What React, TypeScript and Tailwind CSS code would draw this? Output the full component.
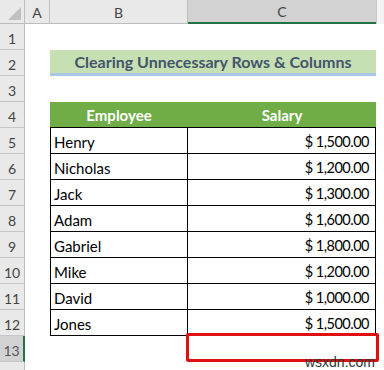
import React from "react";

const rows: [string, string][] = [
  ["Henry", "$ 1,500.00"],
  ["Nicholas", "$ 1,200.00"],
  ["Jack", "$ 1,300.00"],
  ["Adam", "$ 1,600.00"],
  ["Gabriel", "$ 1,800.00"],
  ["Mike", "$ 1,200.00"],
  ["David", "$ 1,000.00"],
  ["Jones", "$ 1,500.00"],
];

function RowHead({ n, sel }: { n: number; sel?: boolean }) {
  return (
    <div
      className={
        sel
          ? "w-[25px] shrink-0 h-full bg-[#d2d2d2] border-b border-[#c6c6c6] border-r-2 border-r-[#217346] flex items-center justify-center text-[14px] text-[#555] pt-[3px]"
          : "w-[25px] shrink-0 h-full bg-[#e9e9e9] border-b border-r border-[#c6c6c6] border-r-[#bdbdbd] flex items-center justify-center text-[14px] text-[#444] pt-[3px]"
      }
    >
      {n}
    </div>
  );
}

export default function App() {
  const font = { fontFamily: "Lato, 'Liberation Sans', sans-serif" };
  return (
    <div className="relative w-[384px] h-[370px] bg-white overflow-hidden" style={font}>
      {/* column header */}
      <div className="flex h-[24px]">
        <div className="relative w-[25px] shrink-0 h-full bg-[#e9e9e9] border-r border-b border-[#bdbdbd]">
          <div className="absolute right-[3px] bottom-[3px] w-0 h-0 border-l-[13px] border-l-transparent border-b-[13px] border-b-[#c0c0c0]" />
        </div>
        <div className="w-[25px] shrink-0 h-full bg-[#e9e9e9] border-r border-b border-[#bdbdbd] flex items-center justify-center text-[14px] text-[#444] pt-[1px]">
          A
        </div>
        <div className="w-[138px] shrink-0 h-full bg-[#e9e9e9] border-r border-b border-[#bdbdbd] flex items-center justify-center text-[14px] text-[#444] pt-[1px]">
          B
        </div>
        <div className="w-[188px] shrink-0 h-full bg-[#d2d2d2] border-b-2 border-[#217346] flex items-center justify-center text-[14px] text-[#444] pt-[1px]">
          C
        </div>
        <div className="flex-1 h-full bg-[#f3f3f3] border-l border-[#c8c8c8]" />
      </div>

      {/* row 1 */}
      <div className="flex h-[26px]">
        <RowHead n={1} />
      </div>
      {/* row 2 title */}
      <div className="flex h-[26px]">
        <RowHead n={2} />
        <div className="w-[25px] shrink-0" />
        <div className="w-[326px] shrink-0 h-full bg-[#c6e0b4] border-b-[3px] border-[#a9c6e4] flex items-center justify-center text-[16px] font-bold text-[#44546a] pt-[1px]">
          Clearing Unnecessary Rows &amp; Columns
        </div>
      </div>
      {/* row 3 */}
      <div className="flex h-[26px]">
        <RowHead n={3} />
      </div>
      {/* row 4 header */}
      <div className="flex h-[26px]">
        <RowHead n={4} />
        <div className="w-[25px] shrink-0" />
        <div className="w-[138px] shrink-0 h-full bg-[#70ad47] border-b border-black flex items-center justify-center text-[15px] font-bold text-white pt-[2px]">
          Employee
        </div>
        <div className="w-[188px] shrink-0 h-full bg-[#70ad47] border-b border-black flex items-center justify-center text-[15px] font-bold text-white pt-[2px]">
          Salary
        </div>
      </div>
      {rows.map(([name, sal], i) => (
        <div key={name} className="flex h-[26px]">
          <RowHead n={i + 5} />
          <div className="w-[25px] shrink-0" />
          <div className="w-[138px] shrink-0 h-full border-l border-r border-b border-black flex items-center pl-[3px] text-[15px] text-black pt-[3px]">
            {name}
          </div>
          <div className="w-[188px] shrink-0 h-full border-r border-b border-black flex items-center justify-end pr-[6px] text-[14.5px] tracking-[-0.5px] text-black pt-[3px]">
            {sal}
          </div>
        </div>
      ))}
      {/* row 13 */}
      <div className="flex h-[26px]">
        <RowHead n={13} sel />
        <div className="w-[25px] shrink-0" />
        <div className="w-[138px] shrink-0" />
        <div className="relative w-[188px] shrink-0 h-full">
          <div className="absolute left-[-2px] top-[-3px] right-[-3px] bottom-0 border-[3px] border-[#e01010] rounded-[2px]" />
          <div
            className="absolute right-[1px] bottom-[-7px] text-[14px] text-[#333] leading-none"
            style={{ fontFamily: "'Liberation Sans', sans-serif" }}
          >
            wsxdn.com
          </div>
        </div>
      </div>
      {/* row 14 partial */}
      <div className="flex h-[26px]">
        <div className="w-[25px] shrink-0 h-full bg-[#e9e9e9] border-r border-[#bdbdbd]" />
      </div>
    </div>
  );
}
